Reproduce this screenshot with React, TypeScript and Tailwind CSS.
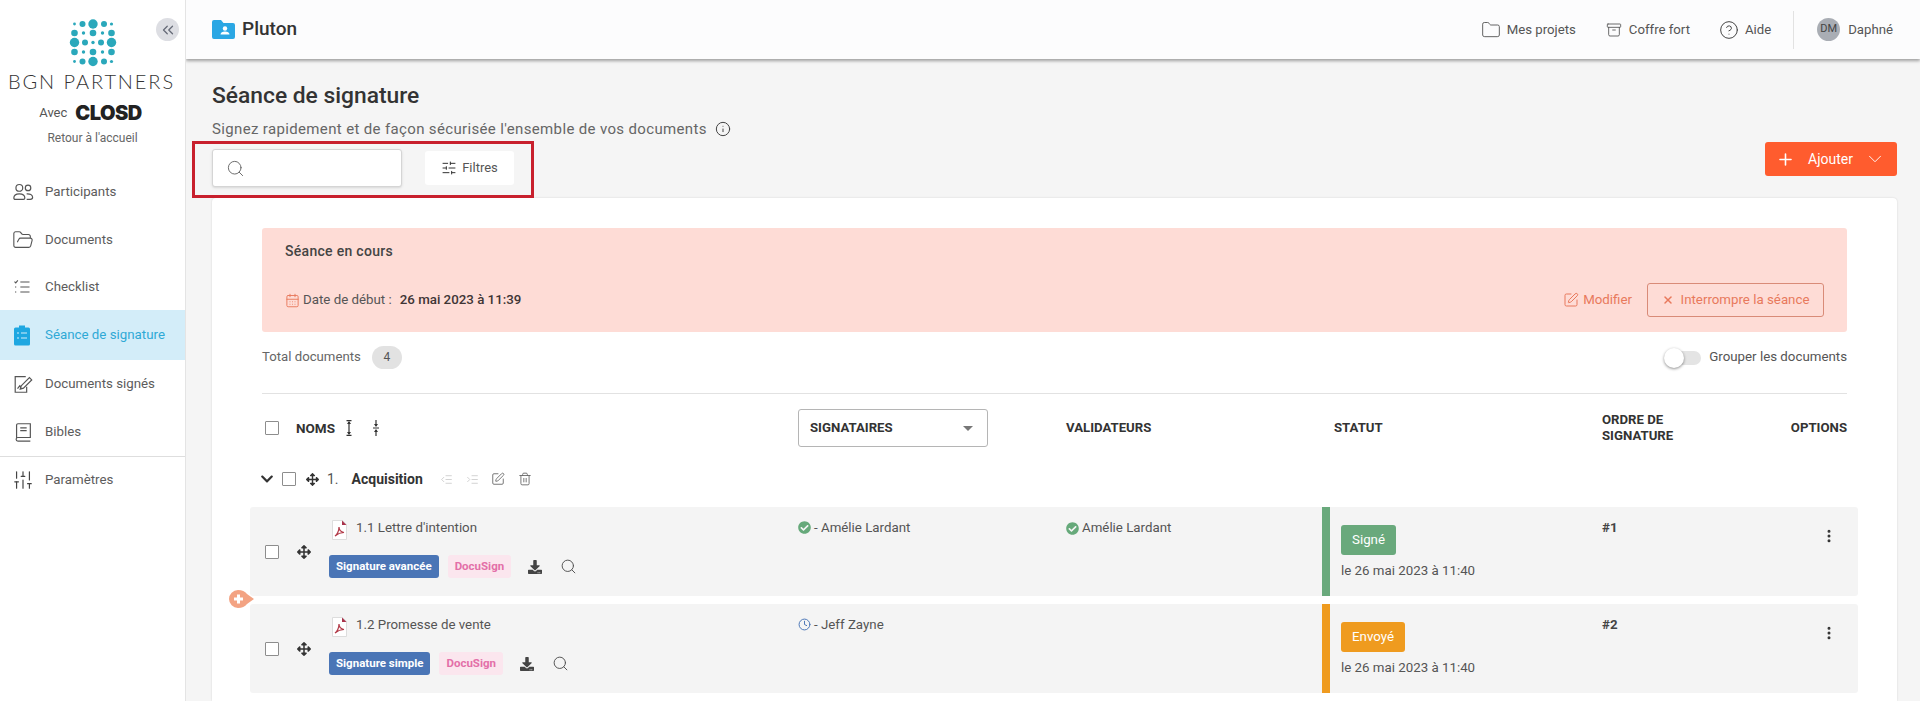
import React from 'react';
import {
    Archive, CalendarDays, ChevronDown, ChevronsLeft, CircleHelp, Clock, EllipsisVertical, Folder, FolderOpen,
    IndentDecrease, IndentIncrease, Info, Plus, Search, SlidersHorizontal, SlidersVertical, SquarePen, Trash2, X
} from 'lucide-react';
import { FaArrowsAlt, FaCheckCircle, FaChevronDown, FaDownload } from 'react-icons/fa';

const LOGO_ROWS = [
    { y: 24, r: [1.4, 3, 4.7, 3, 1.6], x: [75.5, 83.5, 94, 105, 112.5] },
    { y: 33, r: [3.3, 1.7, 3.3, 1.7, 3.3], x: [75.5, 84.5, 94, 103.5, 112.5] },
    { y: 42.5, r: [4.7, 3, 1.7, 3, 4.7], x: [75.5, 86, 94, 102, 112.5] },
    { y: 52, r: [3.3, 1.7, 3.3, 1.7, 3.3], x: [75.5, 84.5, 94, 103.5, 112.5] },
    { y: 61.5, r: [1.4, 3, 4.7, 3, 1.6], x: [75.5, 83.5, 94, 105, 112.5] }
];

const LogoDots = () => (
    <svg width="50" height="50" viewBox="69 19 50 50" fill="#2aa8bb">
        {LOGO_ROWS.map(row => row.x.map((x, i) => <circle key={`${row.y}-${x}`} cx={x} cy={row.y} r={row.r[i]} />))}
    </svg>
);

const iconProps = { width: 20, height: 20, viewBox: '0 0 24 24', fill: 'none', stroke: 'currentColor', strokeWidth: 1.3 };

const UsersIcon = () => (
    <svg {...iconProps} width={22} height={22}>
        <circle cx="8" cy="7.5" r="3.7" />
        <circle cx="17.5" cy="7.5" r="3" />
        <path d="M2 18.5c0-3 2.500-4.500 6-4.500s6 1.500 6 4.500c0 1-.5 1.500-1.500 1.500h-9C2.500 20 2 19.500 2 18.500z" />
        <path d="M16 14c3.500-.3 6.500 1 6.500 3.800 0 1.500-1 2.200-2.500 2.200h-4" />
    </svg>
);

const ChecklistIcon = () => (
    <svg {...iconProps}>
        <path d="M10 6h11M10 12h11M10 18h11" />
        <path d="M3 5.500l1.500 1.500L7 4" />
        <path d="M4 12h1M4 18h1" strokeWidth="2" />
    </svg>
);

const ClipboardIcon = () => (
    <svg width="20" height="22" viewBox="0 0 20 22">
        <path d="M7 1.500h6v2h3.500a1.500 1.500 0 0 1 1.500 1.500v15a1.500 1.500 0 0 1-1.500 1.500h-13A1.500 1.500 0 0 1 2 20V5a1.500 1.500 0 0 1 1.500-1.500H7z" fill="#1ea7e1" />
        <path d="M9 9h6M9 14h6M5 9h2M5 14h2" stroke="#d3edf9" strokeWidth="1.2" />
    </svg>
);

const SignedIcon = () => (
    <svg {...iconProps} width={22} height={22}>
        <path d="M15 4H3.500v17H16v-6" />
        <path d="M10 14l9-9 2.500 2.500-9 9-3.500 1z" />
        <path d="M6 17l2.500-3 1.500 2" />
    </svg>
);

const BookIcon = () => (
    <svg {...iconProps} width={22} height={22}>
        <path d="M5 18V4.500A1.500 1.500 0 0 1 6.500 3H20v15H6.500a2 2 0 0 0 0 4H20" />
        <path d="M9 7.500h7M9 10.500h7" />
    </svg>
);

const PdfIcon = () => (
    <svg width="15" height="20" viewBox="0 0 15 20" className="shrink-0">
        <path d="M.5.500h10l4 4v15H.500z" fill="#fff" stroke="#ddd" />
        <path d="M10 .500l4.500 4.500H10z" fill="#a8324a" />
        <path d="M3 16c2-1 4-5 4-9 0 3 2 5 5 5.500-3 0-6 1-9 3.500z" fill="none" stroke="#b23a48" strokeWidth="1.200" />
    </svg>
);

const SortIcon = ({ inward }: { inward?: boolean }) => (
    <svg width="10" height="16" viewBox="0 0 10 16" fill="#333" stroke="#333" strokeWidth="1.200">
        {inward ? (
            <>
                <path d="M5 0v6M5 10v6M2 8h6" />
                <path d="M3 4h4L5 7zM3 12h4L5 9z" strokeWidth="0" />
            </>
        ) : (
            <>
                <path d="M5 2v12M2.500 .600h5M2.500 15.400h5" />
                <path d="M3 4h4L5 1zM3 12h4l-2 3z" strokeWidth="0" />
            </>
        )}
    </svg>
);

const AddBubble = () => (
    <svg width="26" height="18" viewBox="0 0 26 18">
        <path d="M9 0c4 0 7 1.500 9 4l7 5-7 5c-2 2.500-5 4-9 4a9 9 0 0 1 0-18z" fill="#f3a383" />
        <path d="M9.500 4.500v9M5 9h9" stroke="#fff" strokeWidth="3" />
    </svg>
);

const Checkbox = ({ className = '' }: { className?: string }) => (
    <div className={`w-[14px] h-[14px] shrink-0 border border-[#8d8d8d] rounded-[1px] bg-white ${className}`} />
);

const NAV = [
    { label: 'Participants', icon: <UsersIcon />, h: 48 },
    { label: 'Documents', icon: <FolderOpen size={22} strokeWidth={1.2} />, h: 47 },
    { label: 'Checklist', icon: <ChecklistIcon />, h: 47 },
    { label: 'Séance de signature', icon: <ClipboardIcon />, h: 50, active: true },
    { label: 'Documents signés', icon: <SignedIcon />, h: 48 },
    { label: 'Bibles', icon: <BookIcon />, h: 48 }
];

const Sidebar = () => (
    <aside className="w-[186px] shrink-0 bg-white border-r border-[#e4e4e4] flex flex-col relative z-20">
        <button className="absolute top-[18px] left-[156px] w-[23px] h-[23px] rounded-full bg-[#dddee3] flex items-center justify-center text-[#666b78]">
            <ChevronsLeft size={18} strokeWidth={1.7} />
        </button>
        <div className="flex flex-col items-center pt-[19px]">
            <LogoDots />
            <div className="text-[20px] leading-[24px] tracking-[1.9px] font-light text-[#333] font-['Lato',sans-serif] whitespace-nowrap -ml-[2px]">BGN PARTNERS</div>
            <div className="flex items-center gap-[8px] mt-[10px] h-[20px] -ml-[4px]">
                <span className="text-[13px] text-[#555]">Avec</span>
                <span className="text-[20px] leading-[20px] font-black tracking-[-0.5px] text-[#222] font-['Inter',sans-serif]">CLOSD</span>
            </div>
            <div className="text-[12px] leading-[16px] text-[#666] mt-[7px]">Retour à l'accueil</div>
        </div>
        <nav className="mt-[22px] flex flex-col">
            {NAV.map(item => (
                <div
                    key={item.label}
                    style={{ height: item.h }}
                    className={`flex items-center ${item.active ? 'bg-[#d3edf9] text-[#2fa9d6]' : 'text-[#5c5c5c]'}`}
                >
                    <span className={`w-[45px] pl-[12px] shrink-0 ${item.active ? '' : 'text-[#555]'}`}>{item.icon}</span>
                    <span className="text-[13.3px] whitespace-nowrap">{item.label}</span>
                </div>
            ))}
            <div className="flex items-center h-[47px] border-t border-[#dedede] text-[#5c5c5c]">
                <span className="w-[45px] pl-[12px] shrink-0 text-[#444]"><SlidersVertical size={22} strokeWidth={1.3} /></span>
                <span className="text-[13.3px]">Paramètres</span>
            </div>
        </nav>
    </aside>
);

const TopBar = () => (
    <header className="h-[59px] shrink-0 bg-[#fcfcfd] shadow-[0_2px_3px_rgba(0,0,0,0.35)] flex items-center pl-[26px] pr-[27px] relative z-10">
        <svg width="23" height="19" viewBox="0 0 23 19">
            <path d="M2 0h7l2.500 3H21a2 2 0 0 1 2 2v12a2 2 0 0 1-2 2H2a2 2 0 0 1-2-2V2a2 2 0 0 1 2-2z" fill="#2ba7e4" />
            <circle cx="13" cy="8.500" r="2.200" fill="#fff" />
            <path d="M8.500 14.500c0-2 2-3 4.500-3s4.500 1 4.500 3z" fill="#fff" />
        </svg>
        <span className="ml-[7px] text-[19px] font-medium text-[#333]">Pluton</span>
        <div className="ml-auto flex items-center text-[13.2px] text-[#555]">
            <Folder size={20} strokeWidth={1.1} />
            <span className="ml-[6px]">Mes projets</span>
            <Archive size={16} strokeWidth={1.3} className="ml-[30px]" />
            <span className="ml-[7px]">Coffre fort</span>
            <CircleHelp size={20} strokeWidth={1.2} className="ml-[29px] text-[#444]" />
            <span className="ml-[6px]">Aide</span>
            <div className="w-px h-[38px] bg-[#e2e2e2] ml-[22px]" />
            <div className="w-[23px] h-[23px] rounded-full bg-[#a9adb4] ml-[23px] flex items-center justify-center text-[11px] text-[#444]">DM</div>
            <span className="ml-[8px]">Daphné</span>
        </div>
    </header>
);

const SessionBanner = () => (
    <div className="h-[104px] shrink-0 bg-[#fedcd6] rounded-[3px] px-[23px] pt-[12px] text-[13.3px]">
        <div className="text-[14px] font-medium text-[#444] leading-[22px] tracking-[0.3px]">Séance en cours</div>
        <div className="flex items-center mt-[21px] h-[34px]">
            <CalendarDays size={15} strokeWidth={1.5} className="text-[#e8795c]" />
            <span className="ml-[3px] text-[#555]">Date de début :</span>
            <span className="ml-[8px] font-medium text-[#3f3535]">26 mai 2023 à 11:39</span>
            <SquarePen size={16} strokeWidth={1.5} className="ml-auto text-[#e8795c]" />
            <span className="ml-[4px] text-[#e8795c]">Modifier</span>
            <button className="ml-[15px] h-[34px] w-[177px] border border-[#d98b78] rounded-[3px] flex items-center justify-center text-[#e8795c]">
                <X size={12} strokeWidth={3} />
                <span className="ml-[7px]">Interrompre la séance</span>
            </button>
        </div>
    </div>
);

const headerClass = 'text-[13.2px] font-bold text-[#333] uppercase';

const TableHeader = () => (
    <div className="grid grid-cols-[536px_268px_268px_268px_1fr] items-center h-[68px] shrink-0">
        <div className="flex items-center pl-[3px]">
            <Checkbox />
            <span className={`ml-[17px] ${headerClass} text-[13.5px]`}>NOMS</span>
            <span className="ml-[9px]"><SortIcon /></span>
            <span className="ml-[17px]"><SortIcon inward /></span>
        </div>
        <div className="w-[190px] h-[38px] border border-[#b5b5b5] rounded-[3px] flex items-center justify-between pl-[11px] pr-[14px]">
            <span className={headerClass}>SIGNATAIRES</span>
            <span className="w-0 h-0 border-x-[5px] border-x-transparent border-t-[5px] border-t-[#777]" />
        </div>
        <span className={headerClass}>VALIDATEURS</span>
        <span className={headerClass}>STATUT</span>
        <div className="flex items-center justify-between">
            <span className={`${headerClass} leading-[16px]`}>ORDRE DE<br />SIGNATURE</span>
            <span className={headerClass}>OPTIONS</span>
        </div>
    </div>
);

const GroupRow = () => (
    <div className="flex items-center h-[34px] shrink-0 text-[14px] text-[#333] -ml-[2px]">
        <FaChevronDown size={14} />
        <Checkbox className="ml-[8px]" />
        <FaArrowsAlt size={13} className="ml-[10px] text-[#333]" />
        <span className="ml-[8px] text-[#555]">1.</span>
        <span className="ml-[13px] font-bold">Acquisition</span>
        <IndentDecrease size={13} strokeWidth={1.2} className="ml-[17px] text-[#bbb]" />
        <IndentIncrease size={13} strokeWidth={1.2} className="ml-[13px] text-[#bbb]" />
        <SquarePen size={14} strokeWidth={1.5} className="ml-[12px] text-[#666]" />
        <Trash2 size={14} strokeWidth={1.5} className="ml-[13px] text-[#666]" />
    </div>
);

type DocRowProps = {
    name: string;
    badge: string;
    signer: React.ReactNode;
    validator?: string;
    barColor: string;
    status: string;
    statusColor: string;
    order: string;
};

const DocRow = ({ name, badge, signer, validator, barColor, status, statusColor, order }: DocRowProps) => (
    <div className="grid grid-cols-[548px_268px_256px_280px_1fr] h-[89px] shrink-0 bg-[#f4f4f4] rounded-[3px] text-[13.3px] text-[#555]">
        <div className="flex pl-[15px]">
            <Checkbox className="self-center bg-transparent" />
            <FaArrowsAlt size={14} className="self-center ml-[18px] text-[#333]" />
            <div className="ml-[18px] pt-[13px]">
                <div className="flex items-start h-[19px] pl-[3px]">
                    <PdfIcon />
                    <span className="ml-[9px] leading-[15px]">{name}</span>
                </div>
                <div className="flex items-center mt-[16px]">
                    <span className="h-[23px] px-[7px] rounded-[3px] bg-[#4a75b6] text-white text-[11.5px] font-bold flex items-center">{badge}</span>
                    <span className="ml-[9px] h-[23px] px-[7px] rounded-[3px] bg-[#fbe6ee] text-[#e36fa8] text-[11.5px] font-bold flex items-center">DocuSign</span>
                    <FaDownload size={14} className="ml-[17px] text-[#444]" />
                    <Search size={17} strokeWidth={1.4} className="ml-[18px] text-[#555]" />
                </div>
            </div>
        </div>
        <div className="pt-[11px] flex items-start gap-[3px] leading-[20px]">{signer}</div>
        <div className="pt-[11px] leading-[20px]">
            {validator && (
                <span className="flex items-center gap-[3px]">
                    <FaCheckCircle size={13} className="text-[#66a97a]" />
                    {validator}
                </span>
            )}
        </div>
        <div className="flex">
            <div className={`w-[8px] h-full ${barColor}`} />
            <div className="pl-[11px] pt-[18px]">
                <span className={`inline-flex items-center h-[30px] px-[11px] rounded-[3px] text-white ${statusColor}`}>{status}</span>
                <div className="mt-[6px] leading-[20px] whitespace-nowrap">le 26 mai 2023 à 11:40</div>
            </div>
        </div>
        <div className="flex justify-between pt-[12px] pr-[21px]">
            <span className="font-bold text-[#444] leading-[18px]">{order}</span>
            <EllipsisVertical size={16} strokeWidth={2.500} className="mt-[9px] text-[#333]" />
        </div>
    </div>
);

export default function App() {
    return (
        <div className="h-[701px] w-[1920px] flex overflow-hidden bg-[#f5f5f5] font-['Roboto',sans-serif]">
            <Sidebar />
            <main className="flex-1 flex flex-col min-w-0">
                <TopBar />
                <div className="flex-1 flex flex-col pl-[26px] pr-[23px] min-h-0">
                    <h1 className="pt-[23px] text-[22.8px] leading-[28px] font-medium text-[#333]">Séance de signature</h1>
                    <div className="mt-[9px] flex items-center text-[15px] leading-[20px] text-[#666] tracking-[0.35px]">
                        Signez rapidement et de façon sécurisée l'ensemble de vos documents
                        <Info size={16} strokeWidth={1.5} className="ml-[8px] text-[#444]" />
                    </div>
                    <div className="mt-[10px] h-[38px] shrink-0 flex items-start justify-between">
                        <div className="relative flex items-center">
                            <div className="w-[190px] h-[38px] bg-white border border-[#d5d5d5] rounded-[3px] shadow-sm flex items-center pl-[13px] text-[#666]">
                                <Search size={19} strokeWidth={1.2} />
                            </div>
                            <button className="ml-[23px] w-[89px] h-[34px] bg-white rounded-[3px] flex items-center justify-center text-[13px] text-[#555]">
                                <SlidersHorizontal size={16} strokeWidth={1.5} className="text-[#333]" />
                                <span className="ml-[5px]">Filtres</span>
                            </button>
                            <div className="absolute -left-[20px] -top-[8px] w-[342px] h-[57px] border-[3px] border-[#c8202d]" />
                        </div>
                        <button className="-mt-[7px] w-[132px] h-[34px] bg-[#ff5c2e] rounded-[3px] flex items-center justify-center text-white text-[14px]">
                            <Plus size={19} strokeWidth={2} />
                            <span className="ml-[13px] mr-[11px]">Ajouter</span>
                            <ChevronDown size={22} strokeWidth={1} />
                        </button>
                    </div>
                    <section className="mt-[11px] flex-1 min-h-0 bg-white rounded-t-[4px] shadow-[0_0_2px_rgba(0,0,0,0.15)] px-[50px] pt-[30px] flex flex-col overflow-visible">
                        <SessionBanner />
                        <div className="mt-[11px] h-[28px] shrink-0 flex items-center text-[13.2px] text-[#666]">
                            Total documents
                            <span className="ml-[11px] w-[30px] h-[23px] rounded-full bg-[#e2e2e2] flex items-center justify-center text-[12px] text-[#555]">4</span>
                            <div className="ml-auto relative w-[34px] h-[14px] rounded-full bg-[#e4e4e4] mr-[8px] mt-[2px]">
                                <div className="absolute -left-[3px] -top-[3px] w-[20px] h-[20px] rounded-full bg-white shadow-[0_1px_3px_rgba(0,0,0,0.45)]" />
                            </div>
                            <span className="text-[13.3px] text-[#555]">Grouper les documents</span>
                        </div>
                        <div className="mt-[22px] shrink-0 border-t border-[#e2e2e2]" />
                        <TableHeader />
                        <GroupRow />
                        <div className="relative -ml-[12px] -mr-[11px] mt-[11px] flex flex-col gap-[8px]">
                            <DocRow
                                name="1.1 Lettre d'intention"
                                badge="Signature avancée"
                                signer={<><FaCheckCircle size={13} className="mt-[3px] text-[#66a97a]" />- Amélie Lardant</>}
                                validator="Amélie Lardant"
                                barColor="bg-[#69a97c]"
                                status="Signé"
                                statusColor="bg-[#69a97c]"
                                order="#1"
                            />
                            <DocRow
                                name="1.2 Promesse de vente"
                                badge="Signature simple"
                                signer={<><Clock size={13} strokeWidth={1.800} className="mt-[3px] text-[#4a75b6]" />- Jeff Zayne</>}
                                barColor="bg-[#ef9b1f]"
                                status="Envoyé"
                                statusColor="bg-[#ef9b1f]"
                                order="#2"
                            />
                            <div className="absolute -left-[21px] top-[83px]">
                                <AddBubble />
                            </div>
                        </div>
                    </section>
                </div>
            </main>
        </div>
    );
}
